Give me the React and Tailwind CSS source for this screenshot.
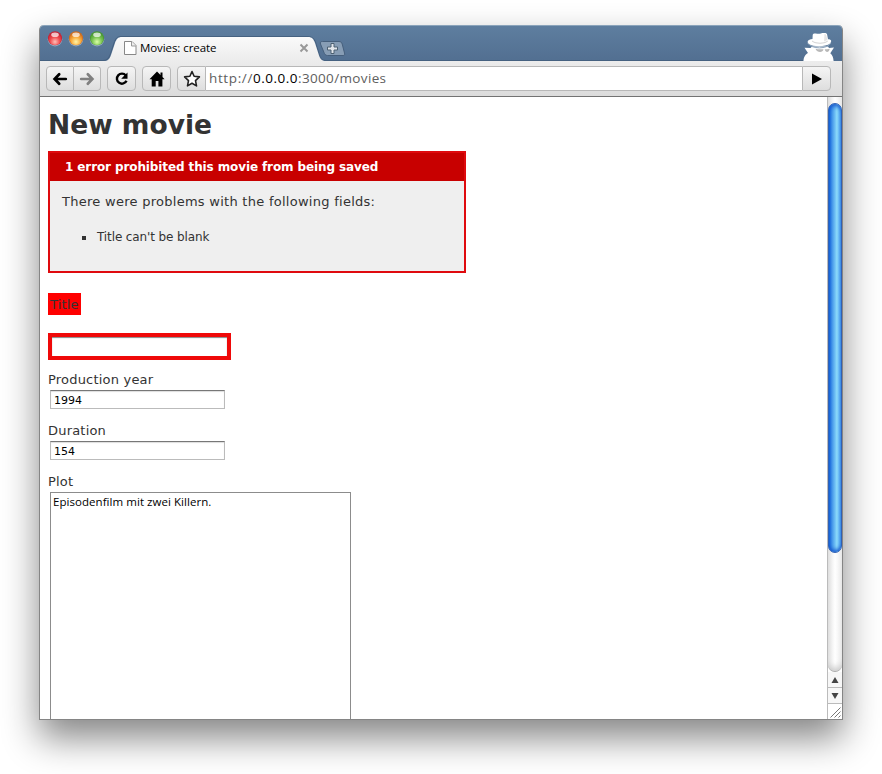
function Light({ id, dark, mid, glow }) {
  return (
    <svg width="16" height="18" viewBox="0 0 16 18" className="shrink-0">
      <defs>
        <radialGradient id={id} cx="50%" cy="75%" r="72%">
          <stop offset="0" stopColor={glow} />
          <stop offset="0.55" stopColor={mid} />
          <stop offset="1" stopColor={dark} />
        </radialGradient>
      </defs>
      <circle cx="8" cy="9.2" r="7.3" fill="#a9bccd" opacity=".7" />
      <circle cx="8" cy="8.3" r="7" fill={dark} />
      <circle cx="8" cy="8.6" r="6.4" fill={`url(#${id})`} />
      <ellipse cx="8" cy="4.8" rx="3.8" ry="2.3" fill="#fff" opacity=".7" />
    </svg>
  );
}

const button = "flex h-[25px] shrink-0 items-center justify-center border border-[#b8b8b8] bg-linear-to-b from-[#f5f5f5] to-[#dedede]";

function Arrow({ color, flip }) {
  return (
    <svg width="16" height="14" viewBox="0 0 16 14" className={flip ? "-scale-x-100" : ""}>
      <path d="M7.2 2.200 2.600 7l4.600 4.800M3 7h10.800" fill="none" stroke={color} strokeWidth="2.700" strokeLinecap="round" />
    </svg>
  );
}

function TitleBar() {
  return (
    <div className="flex h-[36px] shrink-0 rounded-t-[4px] border-t border-[#8ba4bb] bg-linear-to-b from-[#5e7e9f] to-[#526f91]">
      <div className="flex w-[68px] shrink-0 gap-[5px] pt-[4px] pl-[7px]">
        <Light id="red" dark="#c22032" mid="#f0474c" glow="#ffc0b8" />
        <Light id="amber" dark="#cc6a1c" mid="#f8a838" glow="#fff6a8" />
        <Light id="green" dark="#45962f" mid="#78c250" glow="#daffa6" />
      </div>
      <div className="relative h-full w-[216px] shrink-0">
        <svg width="216" height="35" viewBox="0 0 216 35" className="absolute inset-0 overflow-visible">
          <defs>
            <linearGradient id="tab" x2="0" y2="1">
              <stop offset="0" stopColor="#fafafa" />
              <stop offset="1" stopColor="#ececec" />
            </linearGradient>
          </defs>
          <path d="M-68 34.500H-5C-1 34.500 1 32 2.200 28.500L6 17C7.700 12.500 9 10.500 13 10.500H200C204 10.500 206 12.500 207.500 16L211.500 29C213 33 214.500 34.500 218 34.500H695" fill="none" stroke="#456180" strokeWidth="1" />
          <path d="M-4 35C0 35 1.500 33 3 29L7 17C8.500 13 10 11 14 11H200C204 11 205.500 13 207 17L211 29.500C212.500 33.500 214 35 218 35Z" fill="url(#tab)" />
        </svg>
        <div className="relative flex h-full items-center pt-[9px] pl-[16px]">
          <svg width="13" height="14" viewBox="0 0 13 14">
            <path d="M.5.5H8L12 4.500V13.500H.5Z" fill="#fff" stroke="#888" />
            <path d="M7.500.5V5H12" fill="#eee" stroke="#999" />
          </svg>
          <span className="ml-[3px] w-[157px] font-['Open_Sans',sans-serif] text-[11.500px] leading-none font-medium tracking-[-0.080px] whitespace-nowrap text-black">Movies: create</span>
          <svg width="10" height="10" viewBox="0 0 10 10" className="ml-[2px]">
            <path d="m1.500 1.500 7 7m0-7-7 7" stroke="#999" strokeWidth="2" />
          </svg>
        </div>
      </div>
      <svg width="27" height="17" viewBox="0 0 27 17" className="mt-[14px] -ml-[5px] shrink-0">
        <path d="M3.500 1.500H20C22 1.500 22.600 2.500 23.200 4L25.500 13C26 15 25.500 15.500 24 15.500H8.500C6.500 15.500 5.500 14 5 12.500L1.500 4C1 2.300 1.500 1.500 3.500 1.500Z" fill="#879db5" stroke="#465f7c" />
        <path d="M12 3.500h3v3.500h3.500v3h-3.500v3.500h-3v-3.500H8.500v-3H12Z" fill="#e3e7ec" stroke="#4d6072" />
      </svg>
      <div className="grow" />
      <svg width="34" height="29" viewBox="0 0 34 29" className="relative mt-[6px] mr-[6px] shrink-0">
        <path d="M1.500 29C1.700 24.500 3.500 22.500 6 21L2.500 15.700 8.500 16 10 14.500H26L27 16 32 15.600 28.300 21.200C30.500 23 31.300 25.500 31.600 29Z" fill="#fff" />
        <path d="M5.500 11C10 17.500 25 17.500 29 11" fill="none" stroke="#8ba2ba" strokeWidth="1" />
        <path d="M10.500 7 10.700 3C11 1.500 12.500 1.400 15 1.700 18 2 19 1 22 1 24.500 1 25 1.500 25.200 3L26 7.300C29.500 7.200 30 9.500 28 11.500 24 15 11 15 7 12 4.500 10 5.500 7.500 10.500 7Z" fill="#fff" />
        <path d="M10 8.500C14 11.500 22 11.500 25.800 8.500V9.500C22 12.500 14 12.500 10 9.500Z" fill="#d3d3d3" />
        <path d="M22.500 2 24 2.500 25.500 8 22 9.500Z" fill="#e5e5e5" />
        <path d="M13.500 16.700C16 17.500 18 17.300 21.500 17.300 21 21 15 21 13.500 16.700Zm9.200.6C24 17.300 26 17.200 27.700 16.700 27 21 23.500 21 22.700 17.300Z" fill="#b8b8b8" />
      </svg>
    </div>
  );
}

function Toolbar() {
  return (
    <div className="flex h-[36px] shrink-0 items-start border-b border-[#737373] bg-linear-to-b from-[#ececec] to-[#dcdcdc] pt-[5px] pr-[11px] pl-[6px]">
      <div className={`${button} w-[28px] rounded-l-[4px]`}><Arrow color="#000" /></div>
      <div className={`${button} w-[27px] rounded-r-[4px] border-l-0`}><Arrow color="#808080" flip /></div>
      <div className={`${button} ml-[6px] w-[29px] rounded-[4px]`}>
        <svg width="16" height="16" viewBox="0 0 16 16">
          <path d="M11.800 4.500A5 5 0 1 0 12.500 9.700" fill="none" stroke="#000" strokeWidth="2.400" />
          <path d="M13.500 1.500v6.300H7.200Z" />
        </svg>
      </div>
      <div className={`${button} ml-[6px] w-[29px] rounded-[4px]`}>
        <svg width="16" height="16" viewBox="0 0 16 16">
          <path d="M8 .5.500 8.300h2.200V15.500h4V10h2.700v5.500h4V8.300h2.200L13.500 6V1.500h-2V4Z" />
        </svg>
      </div>
      <div className={`${button} ml-[6px] w-[29px] rounded-l-[4px]`}>
        <svg width="18" height="18" viewBox="0 0 18 18">
          <path d="m9 1.500 2.100 4.800 5.300.6-3.900 3.700 1 5.300L9 13.300l-4.500 2.600 1-5.300L1.600 6.900l5.300-.6Z" fill="#fff" stroke="#222" strokeWidth="1.600" strokeLinejoin="round" />
        </svg>
      </div>
      <div className="flex h-[25px] grow items-center border-y border-[#b8b8b8] bg-white pl-[3px] font-['Open_Sans',sans-serif] text-[13.500px] leading-none whitespace-nowrap text-[#606060]">
        <span className="w-[44px] tracking-[0.620px]">http://</span><span className="w-[45px] tracking-[0.500px] text-black">0.0.0.0</span><span className="tracking-[0.350px]">:3000/movies</span>
      </div>
      <div className={`${button} w-[29px] rounded-r-[4px]`}>
        <svg width="12" height="12" viewBox="0 0 12 12"><path d="M1 .5 11 6 1 11.500Z" /></svg>
      </div>
    </div>
  );
}

function Field({ label, value }) {
  return (
    <div className="mb-[15px] flex flex-col">
      <label className="h-[17px] text-[13px] leading-[14px] tracking-[0.200px] text-[#333]">{label}</label>
      <div className="ml-[2px] flex h-[19px] w-[175px] items-center border border-[#bbb] border-t-[#777] bg-white pt-[2px] pl-[3px] font-['DejaVu_Sans',sans-serif] text-[11px] leading-none text-black shadow-[inset_0_1px_1px_#ddd]">{value}</div>
    </div>
  );
}

function Page() {
  return (
    <div className="flex grow flex-col overflow-hidden bg-white pl-[8px] font-['DejaVu_Sans',sans-serif] text-[#333]">
      <h1 className="mt-[10px] h-[44px] text-[26.500px] leading-[36px] font-bold whitespace-nowrap">New movie</h1>
      <div className="h-[122px] w-[418px] shrink-0 border-2 border-[#df0a0e] bg-[#efefef]">
        <h2 className="h-[28px] bg-[#c80000] pl-[15px] text-[12px] leading-[28px] font-bold tracking-[-0.110px] whitespace-nowrap text-white">1 error prohibited this movie from being saved</h2>
        <p className="mt-[13px] pl-[12px] text-[13px] leading-[16px] tracking-[0.270px] whitespace-nowrap">There were problems with the following fields:</p>
        <div className="mt-[19px] flex items-center pl-[32px] text-[12px] leading-[16px]">
          <span className="mt-[2px] mr-[11px] size-[4px] bg-[#333]" />
          <span className="tracking-[-0.110px]">Title can't be blank</span>
        </div>
      </div>
      <div className="mt-[20px] flex h-[22px] w-[33px] shrink-0 items-center bg-[#fe0000] pl-[2px] text-[13px] leading-none tracking-[0.150px]">Title</div>
      <div className="mt-[18px] mb-[13px] h-[27px] w-[183px] shrink-0 border-4 border-[#ef0909] bg-white shadow-[inset_0_1px_1px_#888]" />
      <Field label="Production year" value="1994" />
      <Field label="Duration" value="154" />
      <div className="h-[17px] shrink-0 text-[13px] leading-[14px] tracking-[0.200px]">Plot</div>
      <div className="ml-[2px] w-[301px] grow border border-b-0 border-[#8c8c8c] pt-[2px] pl-[2px] font-['Open_Sans',sans-serif] text-[11.500px] leading-[14px] tracking-[0.050px] whitespace-nowrap text-black">Episodenfilm mit zwei Killern.</div>
    </div>
  );
}

function ScrollBar() {
  return (
    <div className="flex w-[15px] shrink-0 flex-col border-l border-[#bbb] bg-white">
      <div className="flex h-[575px] shrink-0 flex-col rounded-b-[7px] border-b border-[#aaa] bg-linear-to-r from-[#e2e2e2] via-white to-[#ececec] pt-[6px] shadow-[inset_0_-6px_6px_-3px_#ccc]">
        <div className="h-[450px] w-[14px] rounded-[7px] border border-[#3060b4] bg-linear-to-r from-[#1c6edd] from-5% via-[#8bdafa] via-65% to-[#4b9eee] shadow-[inset_0_4px_4px_-2px_#1657cc,inset_0_-4px_4px_-2px_#1657cc]" />
      </div>
      <div className="flex h-[16px] items-center justify-center border-b border-[#bbb] bg-[#f7f7f7]">
        <svg width="8" height="6"><path d="M4 0 7.500 6H.5Z" fill="#444" /></svg>
      </div>
      <div className="flex h-[16px] items-center justify-center border-b border-[#bbb] bg-[#f7f7f7]">
        <svg width="8" height="6"><path d="M.5 0h7L4 6Z" fill="#444" /></svg>
      </div>
      <svg width="14" height="15" viewBox="0 0 14 15">
        <path d="m2.500 13.500 10-10m-6 10 6-6m-2 6 2-2" stroke="#777" fill="none" />
      </svg>
    </div>
  );
}

export default function App() {
  return (
    <div className="h-[774px] w-[882px] overflow-hidden bg-white pt-[25px] pl-[39px]">
      <div className="flex h-[695px] w-[804px] flex-col rounded-t-[5px] border-x border-b border-[#858585] bg-white shadow-[0_18px_36px_rgba(0,0,0,0.480)]">
        <TitleBar />
        <Toolbar />
        <div className="flex min-h-0 grow">
          <Page />
          <ScrollBar />
        </div>
      </div>
    </div>
  );
}
